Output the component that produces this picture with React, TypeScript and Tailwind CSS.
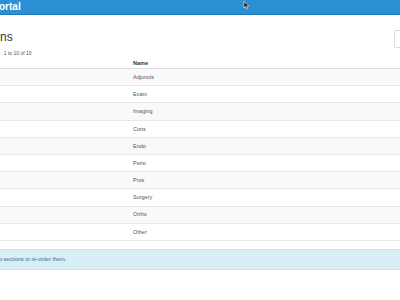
import React from "react";

const rows = ["Adjuncts", "Exam", "Imaging", "Cons", "Endo", "Perio", "Pros", "Surgery", "Ortho", "Other"];

export default function App() {
  return (
    <div className="w-[400px] h-[300px] overflow-hidden bg-white relative" style={{ fontFamily: '"Liberation Sans", Arial, sans-serif' }}>
      <div className="h-[15px] bg-[#2a8fd3] border-b border-[#1f78b8] flex items-center">
        <span className="text-white font-bold text-[10px] leading-none -ml-[1px]">ortal</span>
      </div>
      <div className="flex justify-between items-start">
        <div>
          <div className="mt-[16px] text-[12px] leading-none text-[#333]">ns</div>
          <div className="mt-[8px] text-[5px] leading-none text-[#555] pl-[1px]">: 1 to 10 of 10</div>
        </div>
        <div className="mt-[15px] w-[6px] h-[18px] border border-[#ddd] rounded-l-[2px] border-r-0" />
      </div>
      <div className="mt-[3px]">
        <div className="h-[10px] flex items-center border-b border-[#ddd]">
          <span className="ml-[133px] text-[5.5px] font-bold text-[#333]">Name</span>
        </div>
        {rows.map((r, i) => (
          <div key={r} className={`h-[17.2px] flex items-center border-b border-[#e8e8e8] ${i % 2 === 0 ? "bg-[#f9f9f9]" : "bg-white"}`}>
            <span className="ml-[133px] text-[5.5px] text-[#555]">{r}</span>
          </div>
        ))}
      </div>
      <div className="mt-[8px] h-[21px] bg-[#d9edf7] border-y border-[#bce8f1] flex items-center">
        <span className="text-[5.5px] text-[#31708f] -ml-[1px]">p sections to re-order them.</span>
      </div>
      <svg className="absolute left-[243px] top-[1px]" width="7" height="9" viewBox="0 0 7 9">
        <path d="M1 0.5 L1 7 L2.6 5.6 L3.8 8.2 L4.8 7.7 L3.7 5.2 L5.8 5.1 Z" fill="#111" stroke="#fff" strokeWidth="0.6" />
      </svg>
    </div>
  );
}
